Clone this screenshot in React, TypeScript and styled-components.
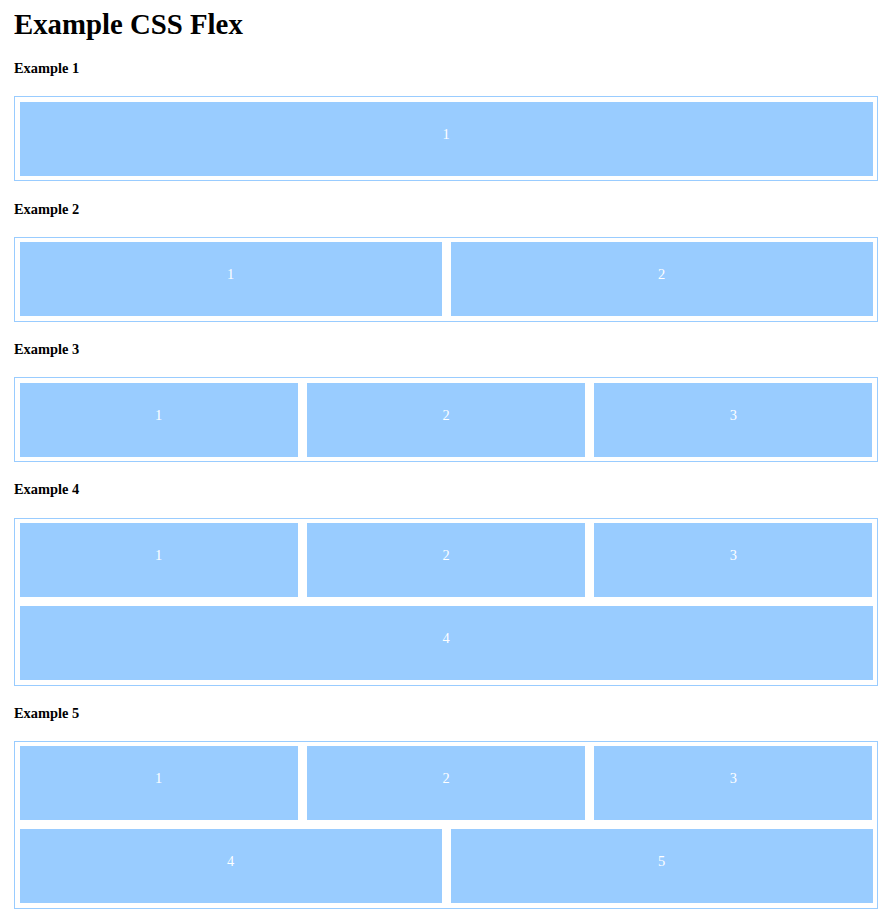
import React from "react";
import styled, { createGlobalStyle } from "styled-components";

const Global = createGlobalStyle`
  html, body { margin: 0; padding: 0; background: #fff; }
  body { font-family: "Liberation Serif", "Times New Roman", serif; color: #000; }
`;

const Page = styled.div`
  padding: 8px 15px 1px 14px;
`;

const Title = styled.h1`
  font-size: 28.8px;
  font-weight: bold;
  margin: 0 0 19.3px;
`;

const Heading = styled.h4`
  font-size: 14.4px;
  font-weight: bold;
  margin: 19.2px 0;
`;

const FlexBox = styled.div`
  display: flex;
  flex-wrap: wrap;
  gap: 9px;
  padding: 4.5px;
  border: 1px solid #99ccff;
`;

const Item = styled.div<{ $cols: number }>`
  box-sizing: border-box;
  flex: 0 0 calc((100% - ${(p) => (p.$cols - 1) * 9}px) / ${(p) => p.$cols});
  height: 74px;
  padding-top: 24px;
  background: #99ccff;
  color: #fff;
  text-align: center;
  font-size: 14.4px;
`;

const examples: number[][] = [[1], [2], [3], [3, 1], [3, 2]];

export default function App() {
  return (
    <>
      <Global />
      <Page>
        <Title>Example CSS Flex</Title>
        {examples.map((rows, i) => {
          let n = 0;
          return (
            <React.Fragment key={i}>
              <Heading>Example {i + 1}</Heading>
              <FlexBox>
                {rows.flatMap((cols) =>
                  Array.from({ length: cols }, () => {
                    n += 1;
                    return (
                      <Item key={n} $cols={cols}>
                        {n}
                      </Item>
                    );
                  })
                )}
              </FlexBox>
            </React.Fragment>
          );
        })}
      </Page>
    </>
  );
}
